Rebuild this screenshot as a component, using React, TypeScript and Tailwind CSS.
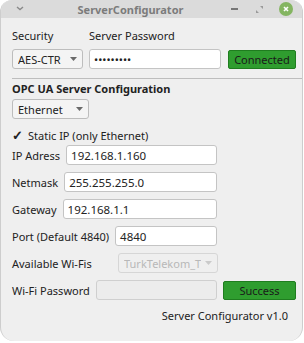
import React from "react"

const Combo = ({ value, className = "", disabled = false }: { value: string; className?: string; disabled?: boolean }) => (
  <div
    className={`flex h-[20px] items-center justify-between rounded-[3px] border px-[5px] ${
      disabled ? "border-[#d6d6d6] bg-[#efefef] text-[#b8b8b8]" : "border-[#bdbdbd] bg-[#f4f4f4] text-[#222]"
    } ${className}`}
  >
    <span className="truncate">{value}</span>
    <svg width="7" height="4" viewBox="0 0 7 4" className="ml-1 shrink-0">
      <path d="M0 0h7L3.5 4z" fill={disabled ? "#cacaca" : "#6a6a6a"} />
    </svg>
  </div>
)

const Field = ({ value = "", className = "", disabled = false }: { value?: string; className?: string; disabled?: boolean }) => (
  <div
    className={`flex h-[20px] items-center rounded-[3px] border px-[4px] text-[11.5px] ${
      disabled ? "border-[#cfcfcf] bg-[#ececec]" : "border-[#c4c4c4] bg-white"
    } ${className}`}
  >
    {value}
  </div>
)

const Row = ({ label, value }: { label: string; value: string }) => (
  <div className="flex h-[20px] w-[205px] items-center gap-[6px]">
    <span className="shrink-0">{label}</span>
    <Field value={value} className="flex-1" />
  </div>
)

export default function App() {
  return (
    <div className="h-[343px] w-[304px] bg-white text-[11px] leading-[15px] text-[#222]" style={{ fontFamily: '"Noto Sans", sans-serif' }}>
      <div className="flex h-[341px] w-[303px] flex-col overflow-hidden rounded-t-[12px] rounded-b-[14px] border-x border-[#cdcdcd] bg-[#efefef]">
        <div className="flex h-[18px] shrink-0 items-center bg-[#dbdbdb] pl-[15px] pr-[9px]">
          <svg width="8" height="5" viewBox="0 0 8 5" className="mt-[-2px]">
            <path d="M1 1l3 2.5L7 1" stroke="#8a8a8a" strokeWidth="1.4" fill="none" />
          </svg>
          <span className="flex-1 pl-[6px] text-center text-[11px] font-bold text-[#7b7b7b]">ServerConfigurator</span>
          <div className="flex items-center">
            <span className="h-[2px] w-[7px] bg-[#777]" />
            <svg width="7" height="7" viewBox="0 0 7 7" className="ml-[18px]">
              <path d="M4 0h3v3zM3 7H0V4z" fill="#9a9a9a" />
            </svg>
            <span className="ml-[16px] flex h-[14px] w-[14px] items-center justify-center rounded-full bg-[#84b561]">
              <svg width="6" height="6" viewBox="0 0 6 6">
                <path d="M1 1l4 4M5 1L1 5" stroke="#fff" strokeWidth="1.6" />
              </svg>
            </span>
          </div>
        </div>

        <div className="flex flex-1 flex-col pl-[11px]">
          <div className="mt-[10px] flex">
            <span className="w-[77px]">Security</span>
            <span>Server Password</span>
          </div>
          <div className="mt-[6px] flex items-center">
            <Combo value="AES-CTR" className="w-[71px]" />
            <Field value="•••••••••" className="ml-[6px] w-[132px] text-[11px]" />
            <button className="ml-[7px] h-[19px] w-[68px] rounded-[2px] border border-[#1f7d1f] bg-[#2f9d2f] text-[11px] text-[#1a1a1a]">
              Connected
            </button>
          </div>

          <div className="mt-[9px] h-px bg-[#bdbdbd]" />

          <div className="mt-[2px] font-bold">OPC UA Server Configuration</div>
          <Combo value="Ethernet" className="mt-[3px] w-[77px]" />

          <div className="mt-[9px] flex items-center gap-[6px]">
            <span className="w-[10px] text-center text-[13px] font-bold leading-none">✓</span>
            <span>Static IP (only Ethernet)</span>
          </div>

          <div className="mt-[2px] flex flex-col gap-[7px]">
            <Row label="IP Adress" value="192.168.1.160" />
            <Row label="Netmask" value="255.255.255.0" />
            <Row label="Gateway" value="192.168.1.1" />
            <Row label="Port (Default 4840)" value="4840" />
            <div className="flex h-[20px] w-[205px] items-center gap-[6px]">
              <span className="w-[100px] shrink-0">Available Wi-Fis</span>
              <Combo value="TurkTelekom_T" disabled className="flex-1" />
            </div>
            <div className="flex items-center">
              <div className="flex h-[20px] w-[205px] items-center gap-[6px]">
                <span className="shrink-0">Wi-Fi Password</span>
                <Field disabled className="flex-1" />
              </div>
              <button className="ml-[6px] h-[19px] w-[73px] rounded-[2px] border border-[#1f7d1f] bg-[#2f9d2f] text-[11px] text-[#1a1a1a]">
                Success
              </button>
            </div>
          </div>

          <div className="mt-[8px] pr-[14px] text-right">Server Configurator v1.0</div>
        </div>
      </div>
    </div>
  )
}
